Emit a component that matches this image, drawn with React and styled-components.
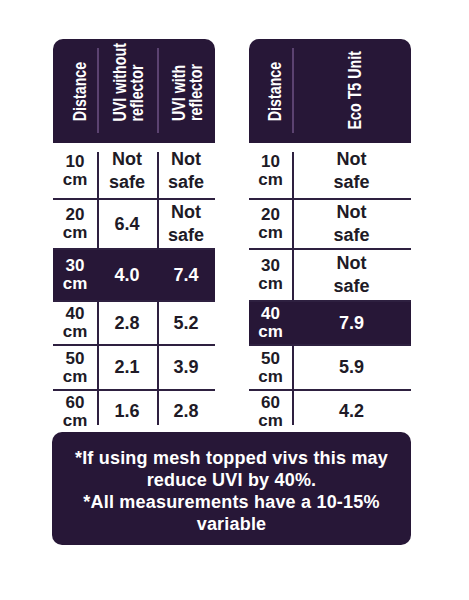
import React from 'react';
import styled, { createGlobalStyle, css } from 'styled-components';

const PURPLE = '#271737';
const LINE = '#2e2040';
const HEAD_LINE = '#5b4270';

const GlobalStyle = createGlobalStyle`
    html, body {
        margin: 0;
        padding: 0;
        background: #ffffff;
    }
    body {
        font-family: "Liberation Sans", Arial, sans-serif;
    }
`

const leftTable = {
    columns: '44px 60px 58px',
    headers: [
        { lines: ['Distance'], shift: 8 },
        { lines: ['UVI without', 'reflector'] },
        { lines: ['UVI with', 'reflector'] },
    ],
    rows: [
        ['10', 'Not safe', 'Not safe'],
        ['20', '6.4', 'Not safe'],
        ['30', '4.0', '7.4'],
        ['40', '2.8', '5.2'],
        ['50', '2.1', '3.9'],
        ['60', '1.6', '2.8'],
    ],
    highlight: 2,
}

const rightTable = {
    columns: '43px 119px',
    headers: [
        { lines: ['Distance'], shift: 8 },
        { lines: ['Eco T5 Unit'], center: true, shift: 4 },
    ],
    rows: [
        ['10', 'Not safe'],
        ['20', 'Not safe'],
        ['30', 'Not safe'],
        ['40', '7.9'],
        ['50', '5.9'],
        ['60', '4.2'],
    ],
    highlight: 3,
}

// row heights (incl. top border) and how far the column lines stay off the table's ends
const rowHeights = [55, 50, 52, 44, 45, 43];
const insetTop = [9, 0, 0, 0, 0, 0];
const insetBottom = [0, 0, 0, 0, 0, 7];

const Table = ({ data }) => (
    <TableBox>
        <Header columns={data.columns}>
            {data.headers.map((h, i) => (
                <HeadCell key={i} divider={i > 0} center={h.center} shift={h.shift}>
                    <Rotated>
                        {h.lines.map((l, j) => <HeadLine key={j} center={h.center}>{l}</HeadLine>)}
                    </Rotated>
                </HeadCell>
            ))}
        </Header>
        {data.rows.map((row, r) => (
            <Row key={r} columns={data.columns} height={rowHeights[r]} first={r === 0} active={r === data.highlight}>
                {row.map((value, c) => (
                    <Cell
                        key={c}
                        divider={c > 0 && r !== data.highlight}
                        top={insetTop[r]}
                        bottom={insetBottom[r]}
                        tight={c === 0}
                    >
                        {c === 0 ? (
                            <>{value}<br />cm</>
                        ) : value === 'Not safe' ? (
                            <>Not<br />safe</>
                        ) : value}
                    </Cell>
                ))}
            </Row>
        ))}
    </TableBox>
)

export default function App() {
    return (
        <>
            <GlobalStyle />
            <Page>
                <Tables>
                    <Table data={leftTable} />
                    <Table data={rightTable} />
                </Tables>
                <Note>
                    *If using mesh topped vivs this may<br />
                    reduce UVI by 40%.<br />
                    *All measurements have a 10-15%<br />
                    variable
                </Note>
            </Page>
        </>
    )
}

const Page = styled.div`
    width: 359px;
    padding: 39px 0 0 52px;
`

const Tables = styled.div`
    display: flex;
    gap: 34px;
    padding-left: 1px;
`

const TableBox = styled.div`
    width: 162px;
    display: flex;
    flex-direction: column;
`

const Header = styled.div`
    display: grid;
    grid-template-columns: ${p => p.columns};
    height: 104px;
    box-sizing: border-box;
    padding: 9px 0 10px;
    background: ${PURPLE};
    border-radius: 10px 10px 0 0;
`

const HeadCell = styled.div`
    display: flex;
    justify-content: center;
    align-items: ${p => p.center ? 'center' : 'flex-end'};
    padding-bottom: ${p => p.center ? 0 : 12}px;
    padding-left: ${p => p.shift || 0}px;
    box-sizing: border-box;
    min-height: 0;
    ${p => p.divider && css`
        border-left: 2px solid ${HEAD_LINE};
    `}
`

const Rotated = styled.div`
    writing-mode: vertical-rl;
    transform: rotate(180deg);
    font-weight: 700;
    font-size: 19px;
    line-height: 17px;
    color: #ffffff;
    white-space: nowrap;
`

// the printed header face is a narrow one: squeeze the run along its length
const HeadLine = styled.span`
    display: block;
    transform: scaleY(0.75);
    transform-origin: ${p => p.center ? 'center' : 'center top'};
`

const Row = styled.div`
    display: grid;
    grid-template-columns: ${p => p.columns};
    height: ${p => p.height}px;
    box-sizing: border-box;
    border-top: ${p => p.first ? 'none' : `2px solid ${LINE}`};
    background: ${p => p.active ? PURPLE : 'transparent'};
    color: ${p => p.active ? '#ffffff' : '#201a26'};
`

const Cell = styled.div`
    display: flex;
    align-items: center;
    justify-content: center;
    text-align: center;
    font-weight: 700;
    font-size: ${p => p.tight ? 17 : 18}px;
    line-height: ${p => p.tight ? 18 : 23}px;
    ${p => p.divider && css`
        background: linear-gradient(${LINE}, ${LINE}) no-repeat left ${p.top}px / 2px calc(100% - ${p.top + p.bottom}px);
    `}
`

const Note = styled.div`
    padding: 15px 8px 10px;
    background: ${PURPLE};
    border-radius: 10px;
    color: #ffffff;
    text-align: center;
    font-weight: 700;
    font-size: 18px;
    line-height: 22px;
    letter-spacing: 0.2px;
`
